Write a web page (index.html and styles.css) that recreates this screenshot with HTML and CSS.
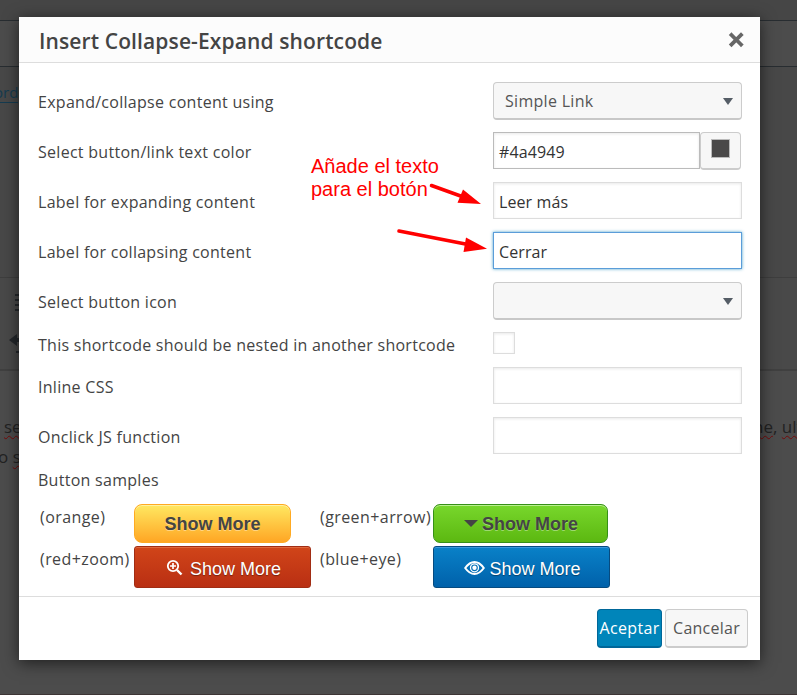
FILE: index.html
```html
<!DOCTYPE html>
<html lang="es">
<head>
<meta charset="utf-8">
<title>Insert Collapse-Expand shortcode</title>
<link rel="stylesheet" href="styles.css">
</head>
<body>
<div class="page">
  <div class="backdrop">
    <div class="band band-top"></div>
    <div class="band band-title"></div>
    <div class="band band-link"><a class="edge-link">ord</a></div>
    <div class="band band-tools">
      <svg class="tool-icons" width="22" height="80" viewBox="0 0 22 80"><path d="M15 17h7M15 22h7M15 27h7M15 32h7" stroke="#24272b" stroke-width="2"/><path d="M9 62l8-6v4h5v4h-5v4z" fill="#24272b"/><path d="M16 74h5" stroke="#24272b" stroke-width="2"/></svg>
    </div>
    <div class="band band-editor">
      <p class="line"><span class="typo">se</span><span class="right"><span class="typo">ne</span>, <span class="typo">ult</span></span></p>
      <p class="line second">o <span class="typo">s</span></p>
    </div>
  </div>

  <section class="dialog">
    <header class="dialog-head">
      <h1>Insert Collapse-Expand shortcode</h1>
      <svg class="close" width="16" height="16" viewBox="0 0 16 16"><path d="M3.500 3L13 12.500M13 3L3.500 12.500" stroke="#666" stroke-width="3.800" stroke-linecap="square" fill="none"/></svg>
    </header>
    <div class="dialog-body">
      <div class="row"><label>Expand/collapse content using</label><div class="select"><span>Simple Link</span><i class="caret"></i></div></div>
      <div class="row"><label>Select button/link text color</label><div class="color"><div class="input dark">#4a4949</div><div class="swatch"><i></i></div></div></div>
      <div class="row"><label>Label for expanding content</label><div class="input">Leer más</div></div>
      <div class="row"><label>Label for collapsing content</label><div class="input focus">Cerrar</div></div>
      <div class="row"><label>Select button icon</label><div class="select"><span></span><i class="caret"></i></div></div>
      <div class="row check-row"><label>This shortcode should be nested in another shortcode</label><div class="check"></div></div>
      <div class="row"><label>Inline CSS</label><div class="input"></div></div>
      <div class="row"><label>Onclick JS function</label><div class="input"></div></div>
      <h2>Button samples</h2>
      <div class="samples">
        <span class="name">(orange)</span>
        <div class="btn orange"><b>Show More</b></div>
        <span class="name">(green+arrow)</span>
        <div class="btn green"><i class="arrow"></i><b>Show More</b></div>
        <span class="name">(red+zoom)</span>
        <div class="btn red"><svg width="18" height="18" viewBox="0 0 18 18" fill="none" stroke="#fff"><circle cx="7" cy="7" r="5.2" stroke-width="1.8"/><path d="M4 7h6M7 4v6" stroke-width="1.7"/><path d="M11 11l4.5 4.5" stroke-width="2.4"/></svg><span>Show More</span></div>
        <span class="name">(blue+eye)</span>
        <div class="btn blue"><svg width="21" height="16" viewBox="0 0 21 16" fill="none" stroke="#fff"><path d="M1.200 8Q5.500 2 10.500 2T19.800 8Q15.500 14 10.500 14T1.200 8z" stroke-width="2"/><circle cx="10.500" cy="7.800" r="4" stroke-width="1.300"/><circle cx="10.500" cy="7.800" r="2.200" fill="#fff" stroke="none"/></svg><span>Show More</span></div>
      </div>
    </div>
    <footer><button class="accept">Aceptar</button><button class="cancel">Cancelar</button></footer>
  </section>

  <div class="note">Añade el texto<br>para el botón</div>
  <svg class="arrows" width="100" height="80" viewBox="390 180 100 80" fill="red"><path d="M431.500 185.500L462 196.500M399 231L468 244.500" stroke="red" stroke-width="3.600" stroke-linecap="round"/><path d="M463 189.500L481 204L457.500 202.800zM466 237.500L487 248.800L463.500 252z"/></svg>
</div>
</body>
</html>
```
FILE: styles.css
```css
* { box-sizing: border-box; }
body { margin: 0; font-family: "Open Sans", "Noto Sans", sans-serif; color: #444; }
.page { position: relative; width: 797px; height: 695px; overflow: hidden; background: #4c4c4c; }
.backdrop { display: flex; flex-direction: column; height: 695px; }
.band { border-bottom: 1px solid #282d31; }
.band-top { height: 21px; background: #464646; }
.band-title { height: 46px; background: #4c4c4c; }
.band-link { height: 211px; padding-top: 16px; background: #484848; border-color: #3e3e3e; }
.edge-link { display: block; margin-left: -6px; width: 24px; font-size: 15px; line-height: 19px; color: #153b50; border-bottom: 1px solid #153b50; }
.band-tools { height: 93px; background: #494949; border-bottom: 2px solid #404040; }
.tool-icons { display: block; }
.band-editor { height: 324px; padding-top: 41px; border-color: #3d3535; background: #4c4c4c; }
.line { display: flex; justify-content: space-between; margin: 0; padding-left: 4px; height: 30px; font-size: 17px; line-height: 30px; color: #222; white-space: pre; }
.line.second { justify-content: flex-start; padding-left: 0; margin-left: -2px; }
.line .right { width: 44px; }
.typo { text-decoration: underline wavy #740909 1px; text-underline-offset: 2px; }

.dialog { position: absolute; left: 19px; top: 17px; width: 741px; height: 643px; background: #fff; box-shadow: 0 3px 15px rgba(0,0,0,.6); display: flex; flex-direction: column; }
.dialog-head { display: flex; justify-content: space-between; align-items: center; height: 46px; padding: 2px 16px 0 20px; background: #fcfcfc; border-bottom: 1px solid #ddd; }
.close { margin-top: -2px; }
h1 { margin: 0; font-size: 21px; line-height: 30px; font-weight: 600; letter-spacing: .12px; white-space: nowrap; }
.dialog-body { flex: 1; padding: 19px 18px 0 19px; }
.row { display: grid; grid-template-columns: 455px 249px; height: 38px; margin-bottom: 12px; }
label, h2, .name { font-size: 16px; font-weight: 400; letter-spacing: .28px; white-space: nowrap; }
label { line-height: 40px; }
.input { height: 37px; padding: 0 5px; border: 1px solid #ddd; background: #fff; box-shadow: inset 0 1px 3px rgba(0,0,0,.09); font-size: 16px; line-height: 38px; letter-spacing: .1px; color: #333; }
.focus { border-color: #5b9dd9; box-shadow: 0 0 3px rgba(30,140,190,.8); }
.select { display: flex; justify-content: space-between; align-items: center; height: 38px; padding: 1px 8px 0 11px; border: 1px solid #ccc; border-bottom: 2px solid #c8c8c8; border-radius: 4px; background: #f7f7f7; font-size: 16px; letter-spacing: .3px; color: #555; }
.caret { border: 5px solid transparent; border-top: 7px solid #555d66; border-bottom: 0; }
.color { display: grid; grid-template-columns: 207px 41px; }
.color .input { border-color: #bbb; }
.swatch { height: 38px; padding: 6px 10px; border: 1px solid #ccc; border-bottom-width: 2px; border-radius: 4px; background: #f7f7f7; }
.swatch i { display: block; width: 19px; height: 19px; border: 1px solid #bbb; background: #4a4949; }
.check-row { height: 22px; margin-bottom: 13px; }
.check-row label { line-height: 26px; letter-spacing: .26px; }
.check { width: 22px; height: 22px; border: 1px solid #ddd; box-shadow: inset 0 1px 3px rgba(0,0,0,.09); }
h2 { margin: 0; line-height: 27px; height: 37px; }
.samples { display: grid; grid-template-columns: 94px 186px 113px 180px; grid-template-rows: 39px 42px; row-gap: 3px; padding-left: 2px; }
.name { line-height: 27px; letter-spacing: .42px; }
.btn { display: flex; align-items: center; justify-content: center; font: 18px/24px "Liberation Sans", Arial, sans-serif; border: 1px solid; }
.btn b { text-shadow: 0 1px 0 rgba(255,255,255,.4); }
.btn span { text-shadow: 0 1px 1px rgba(0,0,0,.4); }
.orange { width: 157px; color: #444; border-color: #ffaa22; border-radius: 8px; background: linear-gradient(#ffe861, #ffa624); box-shadow: inset 0 1px 0 #fff1a0; }
.green { width: 175px; gap: 4px; color: #444; border-color: #369018; border-radius: 7px; background: linear-gradient(#78d72c, #5cb811); box-shadow: inset 0 1px 0 #b9ef8f; padding-left: 1px; }
.arrow { border: 7px solid transparent; border-top: 7px solid #444; border-bottom: 0; }
.red { width: 177px; gap: 6px; color: #fff; border-color: #a12d14; border-radius: 3px; background: linear-gradient(#d14519, #b92f13); box-shadow: inset 0 1px 0 #df683d; padding: 3px 0 0 2px; }
.blue { width: 177px; gap: 4px; color: #fff; border-color: #064b80; border-radius: 3px; background: linear-gradient(#0981c8, #0061aa); box-shadow: inset 0 1px 0 #3b96dc; padding: 3px 0 0 2px; }
.red svg { margin-top: -1px; }
.blue svg { margin-top: -1px; }
footer { display: flex; justify-content: flex-end; gap: 3px; height: 64px; padding: 12px 12px 0 0; border-top: 1px solid #ddd; }
button { height: 39px; padding: 1px 0 0; border: 1px solid #ccc; border-bottom-width: 2px; border-radius: 4px; background: #f7f7f7; color: #555; font: 16px/35px "Open Sans", sans-serif; letter-spacing: .25px; white-space: nowrap; }
.accept { width: 65px; border-color: #006799; background: #0085ba; color: #fff; letter-spacing: .35px; }
.cancel { width: 83px; }

.note { position: absolute; left: 311px; top: 155px; font: 20px/23px "Liberation Sans", Arial, sans-serif; color: red; white-space: nowrap; }
.arrows { position: absolute; left: 390px; top: 180px; }
```
